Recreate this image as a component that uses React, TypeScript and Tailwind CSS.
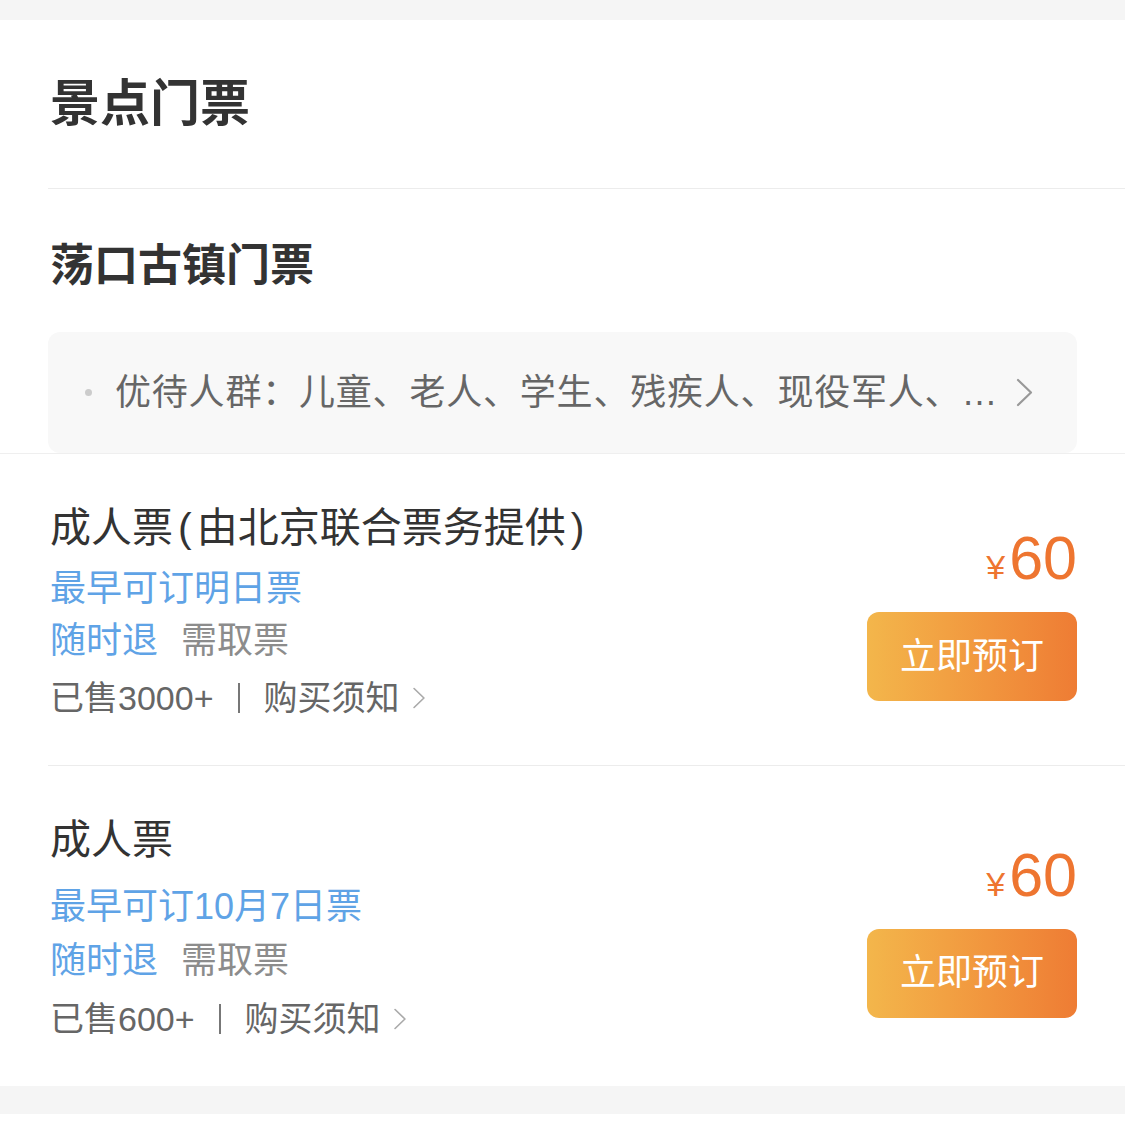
import React from 'react';

const font = { fontFamily: '"Liberation Sans", "Noto Sans CJK SC", sans-serif' };

interface Ticket {
  title: React.ReactNode;
  earliest: string;
  sold: string;
  earliestTop: string;
  refundTop: string;
  soldTop: string;
  bottom: string;
}

const tickets: Ticket[] = [
  {
    title: (
      <>
        成人票<span className="px-[5px]">(</span>由北京联合票务提供<span className="px-[5px]">)</span>
      </>
    ),
    earliest: '最早可订明日票',
    sold: '已售3000+',
    earliestTop: 'mt-[7px]',
    refundTop: 'mt-0',
    soldTop: 'mt-[5px]',
    bottom: 'pb-[41px]',
  },
  {
    title: '成人票',
    earliest: '最早可订10月7日票',
    sold: '已售600+',
    earliestTop: 'mt-[13px]',
    refundTop: 'mt-[2px]',
    soldTop: 'mt-[6px]',
    bottom: 'pb-[40px]',
  },
];

function Chevron({ className }: { className: string }) {
  return (
    <svg viewBox="0 0 17 29" className={className} fill="none" stroke="currentColor" strokeWidth="2.2" strokeLinecap="round" strokeLinejoin="round">
      <polyline points="2,2 15,14.5 2,27" />
    </svg>
  );
}

function TicketRow({ t, last }: { t: Ticket; last: boolean }) {
  return (
    <div className={`ml-[48px] flex items-center justify-between pr-[48px] pt-[46px] ${t.bottom} ${last ? '' : 'border-b border-[#ececec]'}`}>
      <div className="pl-[2px]">
        <div className="text-[41px] leading-[56px] text-[#333] whitespace-nowrap">{t.title}</div>
        <div className={`text-[36px] leading-[52px] text-[#5fa3e6] ${t.earliestTop}`}>{t.earliest}</div>
        <div className={`flex text-[36px] leading-[52px] ${t.refundTop}`}>
          <span className="text-[#5fa3e6]">随时退</span>
          <span className="ml-[23px] text-[#8c8c8c]">需取票</span>
        </div>
        <div className={`flex items-center text-[34px] leading-[52px] text-[#666] ${t.soldTop}`}>
          <span>{t.sold}</span>
          <span className="mx-[24px] h-[30px] w-[2px] bg-[#777]" />
          <span>购买须知</span>
          <Chevron className="ml-[12px] h-[22px] w-[14px] text-[#aaa]" />
        </div>
      </div>
      <div className="flex flex-col items-end">
        <div className="flex items-baseline leading-[70px] text-[#ee7530]">
          <span className="mr-[4px] text-[34px]">¥</span>
          <span className="text-[61px]">60</span>
        </div>
        <button className="mt-[10px] flex h-[89px] w-[210px] items-center justify-center rounded-[12px] bg-gradient-to-r from-[#f3b64b] to-[#ee7c34] text-[36px] text-white">
          立即预订
        </button>
      </div>
    </div>
  );
}

export default function App() {
  return (
    <div className="min-h-[1129px] bg-white" style={font}>
      <div className="h-[20px] bg-[#f5f5f5]" />
      <div className="bg-white pb-[1px]">
        <div className="ml-[48px] flex h-[169px] items-center border-b border-[#ececec] pl-[2px]">
          <h1 className="text-[50px] font-bold leading-[60px] text-[#333]">景点门票</h1>
        </div>
        <div className="border-b border-[#efefef]">
          <h2 className="ml-[50px] mt-[47px] text-[44px] font-bold leading-[60px] text-[#333]">荡口古镇门票</h2>
          <div className="ml-[48px] mt-[36px] flex h-[121px] w-[1029px] items-center rounded-[12px] bg-[#f8f8f8] pl-[37px]">
            <span className="h-[7px] w-[7px] rounded-full bg-[#cccccc]" />
            <span className="ml-[23px] text-[36px] leading-[50px] tracking-[0.8px] text-[#666] whitespace-nowrap">
              优待人群：儿童、老人、学生、残疾人、现役军人、…
            </span>
            <Chevron className="ml-[18px] h-[29px] w-[17px] text-[#999]" />
          </div>
        </div>
        {tickets.map((t, i) => (
          <TicketRow key={i} t={t} last={i === tickets.length - 1} />
        ))}
      </div>
      <div className="h-[28px] bg-[#f5f5f5]" />
    </div>
  );
}
